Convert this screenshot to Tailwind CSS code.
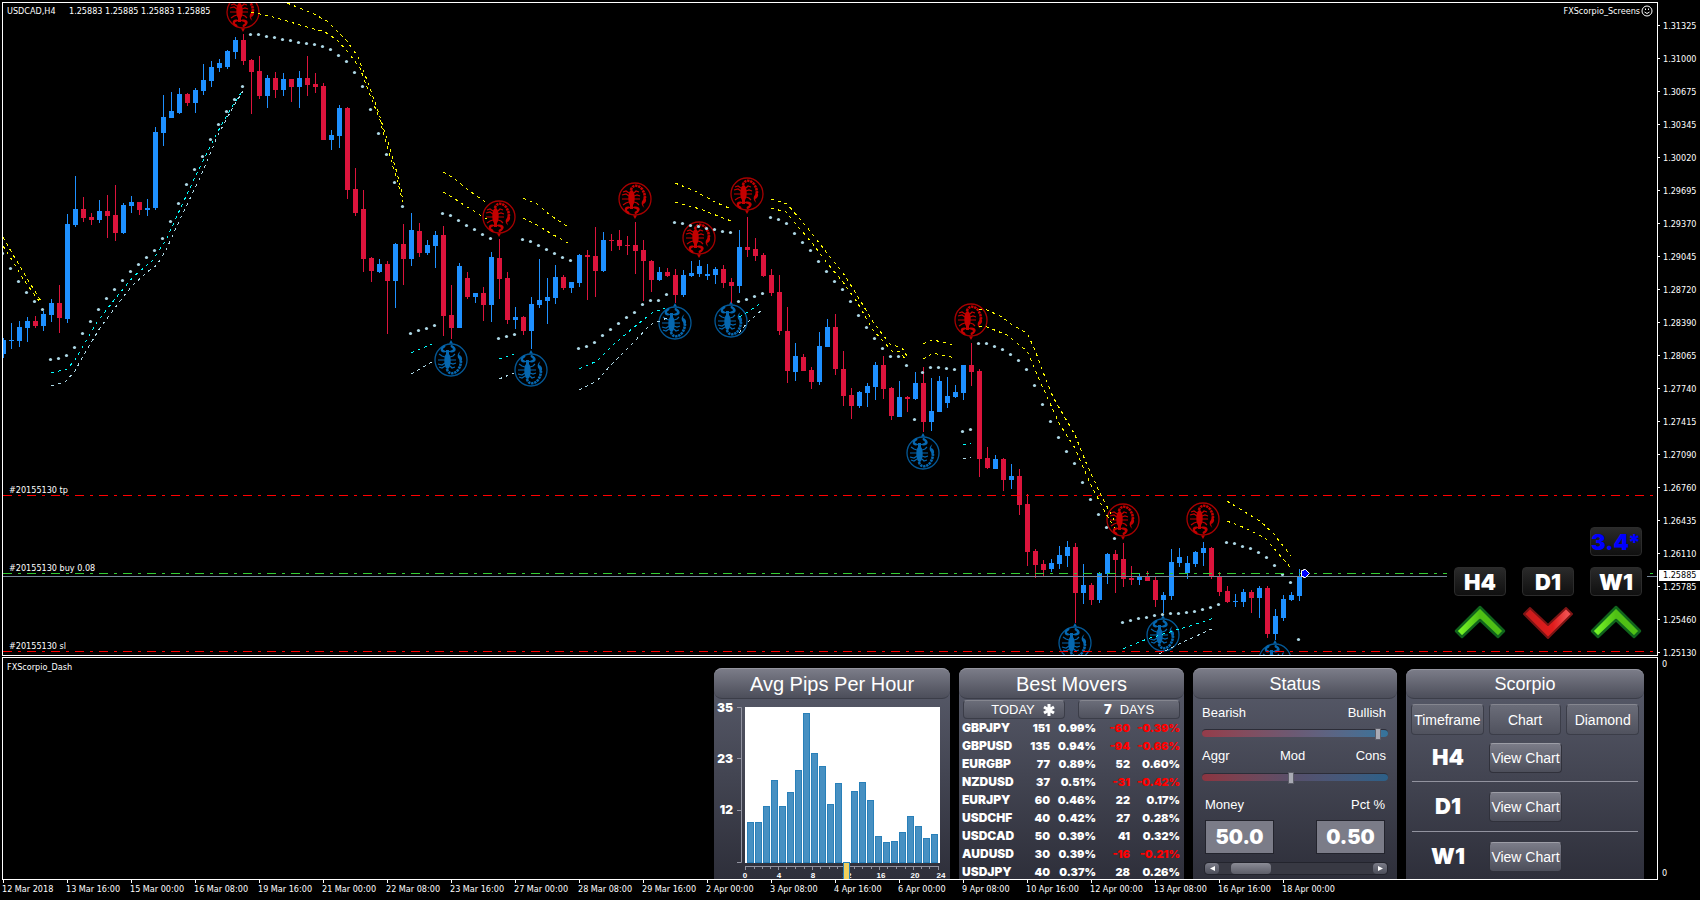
<!DOCTYPE html>
<html lang="en">
<head>
  <meta charset="UTF-8" />
  <meta name="viewport" content="width=device-width, initial-scale=1.0"/>
  <title>USDCAD,H4 - FXScorpio</title>
  <script src="https://cdn.jsdelivr.net/npm/@tailwindcss/browser@4"></script>
</head>
<body class="bg-black text-white">
  <div class="grid min-h-screen grid-cols-[minmax(0,1fr)_42px] grid-rows-[1fr_1px_223px_20px] overflow-hidden pt-[2px] pl-[2px] font-['DejaVu_Sans_Condensed','Noto_Sans',sans-serif] text-[9px] leading-3">

    <!-- Price chart -->
    <main class="relative overflow-hidden border border-white">
      <svg class="absolute inset-0 h-full w-full" id="price-chart" aria-label="USDCAD H4 candles">
        <defs>
          <g id="scorpion">
            <circle r="16" fill="none" stroke="currentColor" stroke-width="1.3" opacity="0.85"/>
            <path d="M-2 16.500H2L0 20Z" fill="currentColor"/>
            <ellipse cx="-3.500" cy="-1" rx="3.200" ry="8" fill="currentColor"/>
            <path d="M-5 6h3v4h-3z" fill="currentColor"/>
            <path d="M-4 -9C-3 -14 3 -15 7 -10C9 -7 10 -4 10 -1" fill="none" stroke="currentColor" stroke-width="2.600" stroke-dasharray="2.400 0.700"/>
            <path d="M9 -3C12 -1 12 4 8 5C9 7 8 8 10 9C6 7 6 3 8 1Z" fill="currentColor"/>
            <path d="M-6 -6L-9 -8L-12 -7M-6 -3L-9 -5L-13 -4M-6 0H-13M-6 3L-9 4L-12 6M-1 -6L1 -8L4 -7M-1 -3L2 -4L5 -3M-1 0H5M-1 3L2 4L4 6" fill="none" stroke="currentColor" stroke-width="1.200"/>
            <path d="M-5 8C-10 6 -13 11 -7 15C-5 15 -5 13 -7 12C-9 11 -8 10 -5 9ZM-2 8C4 6 8 11 1 15C-1 15 -1 13 1 12C3 11 2 10 -2 9Z" fill="currentColor"/>
          </g>
        </defs>
        <g transform="translate(-3 -3)">
          <g id="signals"></g>
          <g id="bands" fill="none" stroke-dasharray="3 4" shape-rendering="crispEdges"></g>
          <g id="candles" shape-rendering="crispEdges"></g>
          <g id="dots" fill="#add8e6"></g>
        </g>
        <!-- Order levels -->
        <g shape-rendering="crispEdges" stroke-dasharray="9 6 3 6">
          <path d="M0 492.500H3000M0 648.500H3000" stroke="#f00"/>
          <path d="M0 570.500H3000" stroke="#32cd32"/>
        </g>
        <path d="M0 573.500H3000" stroke="#778899" shape-rendering="crispEdges"/>
        <path d="M1300.500 566.500H1302.500L1306.500 570.500L1302.500 574.500H1300.500V573.500H1298.500V567.500H1300.500Z" fill="#00f" stroke="#fff"/>
      </svg>

      <div class="relative flex justify-between px-1 pt-[2px]">
        <p class="flex"><span class="w-[62px]">USDCAD,H4</span><span class="w-9">1.25883</span><span class="w-9">1.25885</span><span class="w-9">1.25883</span><span class="w-9">1.25885</span></p>
        <p class="flex gap-px">FXScorpio_Screens
          <svg class="h-3 w-3" viewBox="0 0 12 12" fill="none" stroke="#fff"><circle cx="6" cy="6" r="5"/><path d="M3.500 7Q6 10 8.500 7M4.500 3.500V5M7.500 3.500V5"/></svg>
        </p>
      </div>

      <p class="absolute top-[481px] left-[6px]">#20155130 tp</p>
      <p class="absolute top-[559px] left-[6px]">#20155130 buy 0.08</p>
      <p class="absolute top-[637px] left-[6px]">#20155130 sl</p>

      <!-- Timeframe trend widget -->
      <div class="absolute top-[524px] right-[10px] grid w-[200px] grid-cols-[52px_52px_52px] gap-x-4 bg-black pl-[7px] font-['Inter',sans-serif] text-[22px] leading-7 font-black">
        <div class="col-start-3 mb-[11px] h-[29px] rounded-sm border border-[#2c2c2c] bg-linear-to-b from-[#2a2a2a] to-[#101010] text-center text-[#00f]">3.4*</div>
        <button class="col-start-1 h-[29px] rounded-sm border border-[#2c2c2c] bg-linear-to-b from-[#2a2a2a] to-[#101010]">H4</button>
        <button class="h-[29px] rounded-sm border border-[#2c2c2c] bg-linear-to-b from-[#2a2a2a] to-[#101010]">D1</button>
        <button class="h-[29px] rounded-sm border border-[#2c2c2c] bg-linear-to-b from-[#2a2a2a] to-[#101010]">W1</button>
        <svg class="mt-[9px] h-[34px] w-[52px]" viewBox="0 0 52 34">
          <linearGradient id="up" x1="0" x2="1"><stop stop-color="#7dff2a"/><stop offset="0.5" stop-color="#4fbf14"/><stop offset="1" stop-color="#4fc016"/></linearGradient>
          <path d="M26 2L50 26L44 32L26 15L8 32L2 26Z" fill="url(#up)" stroke="#10641c" stroke-width="2.500" stroke-linejoin="round"/>
        </svg>
        <svg class="mt-[9px] h-[34px] w-[52px]" viewBox="0 0 52 34">
          <linearGradient id="down" x1="0" x2="1"><stop stop-color="#c81c1c"/><stop offset="0.6" stop-color="#e01c1c"/><stop offset="0.9" stop-color="#f05050"/></linearGradient>
          <path d="M26 33L50 9L44 3L26 20L8 3L2 9Z" fill="url(#down)" stroke="#7c1414" stroke-width="2" stroke-linejoin="round"/>
        </svg>
        <svg class="mt-[9px] h-[34px] w-[52px]" viewBox="0 0 52 34">
          <path d="M26 2L50 26L44 32L26 15L8 32L2 26Z" fill="url(#up)" stroke="#10641c" stroke-width="2.500" stroke-linejoin="round"/>
        </svg>
      </div>
    </main>

    <!-- Price scale -->
    <aside class="relative pt-[7px]">
      <ul id="prices" class="-mb-5"></ul>
      <p class="absolute top-[568px] right-0 left-[1px] h-[11px] bg-white pl-1 leading-[11px] text-black">1.25885</p>
    </aside>

    <div class="col-span-2"></div>

    <!-- Dashboard -->
    <section class="flex justify-between overflow-hidden border border-white pt-[10px] pr-[13px]">
      <h1 class="-mt-[7px] pl-1">FXScorpio_Dash</h1>

      <div class="flex gap-[9px] font-['Liberation_Sans',Arial,sans-serif]">
        <!-- Avg pips per hour -->
        <article class="h-[220px] w-[236px] rounded-lg bg-linear-to-b from-[#5a5d6c] to-[#2c2d38]">
          <h2 class="mb-2 h-[31px] rounded-lg border-t border-b border-t-[#94959f] border-b-[#3b3d48] bg-linear-to-b from-[#7b7c88] to-[#4c4e5a] text-center text-xl leading-[30px]">Avg Pips Per Hour</h2>
          <div class="flex">
            <ul class="-mt-[6px] w-[19px] text-right font-['Inter',sans-serif] text-xs leading-[14px] font-black">
              <li class="h-[51px]">35</li>
              <li class="h-[51px]">23</li>
              <li>12</li>
            </ul>
            <svg class="mr-[3px] ml-1 h-[156px] w-[5px]" fill="none" stroke="#9293a0"><path d="M0 0.500H4.500V155.500H0M0 51.500H4M0 103.500H4"/></svg>
            <div class="w-[195px]">
              <div id="bars" class="flex h-[156px] items-end gap-px bg-white px-[2px]"></div>
              <svg class="mt-[3px] h-1 w-[195px]" fill="none" stroke="#9293a0"><path d="M0 0.500H194M0.500 0V4M33.500 0V4M67.500 0V4M100.500 0V4M134.500 0V4M168.500 0V4M193.500 0V4"/><path d="M9.500 0V3M17.500 0V3M25.500 0V3M41.500 0V3M50.500 0V3M59.500 0V3M75.500 0V3M84.500 0V3M92.500 0V3M109.500 0V3M117.500 0V3M126.500 0V3M142.500 0V3M151.500 0V3M160.500 0V3M176.500 0V3M184.500 0V3"/></svg>
              <div class="relative -ml-[17px] grid w-[222px] grid-cols-[repeat(6,34px)_18px] text-center text-[8px] leading-[11px] font-bold">
                <span>0</span><span>4</span><span>8</span><span>12</span><span>16</span><span>20</span><span>24</span>
                <i class="absolute -top-[8px] left-[115px] h-6 w-[7px] border border-[#2980b9] bg-[#f0cf5c]"></i>
              </div>
            </div>
          </div>
        </article>

        <!-- Best movers -->
        <article class="h-[220px] w-[225px] rounded-lg bg-linear-to-b from-[#5a5d6c] to-[#2c2d38]">
          <h2 class="h-[31px] rounded-lg border-t border-b border-t-[#94959f] border-b-[#3b3d48] bg-linear-to-b from-[#7b7c88] to-[#4c4e5a] text-center text-xl leading-[30px]">Best Movers</h2>
          <div class="mt-px flex justify-between px-1 text-[13px] leading-[17px]">
            <button class="flex h-[19px] w-[102px] items-center justify-center gap-2 rounded border border-t-[#85868f] border-r-[#3b3d48] border-b-[#3b3d48] border-l-[#3b3d48] bg-linear-to-b from-[#6b6d79] to-[#50525e] pl-[18px]">TODAY
              <svg class="h-3 w-3" viewBox="0 0 12 12" stroke="#fff" stroke-width="3"><path d="M6 0V12M1 3L11 9M1 9L11 3"/></svg>
            </button>
            <button class="flex h-[19px] w-[102px] items-center justify-center gap-2 rounded border border-t-[#85868f] border-r-[#3b3d48] border-b-[#3b3d48] border-l-[#3b3d48] bg-linear-to-b from-[#6b6d79] to-[#50525e]"><b class="font-['Inter',sans-serif] font-black">7</b>DAYS</button>
          </div>
          <table class="ml-[3px] w-[218px] table-fixed text-right font-['Inter',sans-serif] text-[11px] leading-[18px] font-black">
            <colgroup><col class="w-[57px]"/><col class="w-[31px]"/><col class="w-[46px]"/><col class="w-[34px]"/><col class="w-[50px]"/></colgroup>
            <tbody id="movers"></tbody>
          </table>
        </article>

        <!-- Status -->
        <article class="h-[220px] w-[204px] rounded-lg bg-linear-to-b from-[#5a5d6c] to-[#2c2d38] text-[13px]">
          <h2 class="h-[31px] rounded-lg border-t border-b border-t-[#94959f] border-b-[#3b3d48] bg-linear-to-b from-[#7b7c88] to-[#4c4e5a] text-center text-lg leading-[30px]">Status</h2>
          <div class="px-[9px] leading-4">
            <label for="trend" class="mt-[6px] flex justify-between pr-[2px]"><span>Bearish</span><span>Bullish</span></label>
            <input id="trend" type="range" value="96" class="mt-[8px] block h-2 w-full appearance-none rounded border-t border-[#2c2d38] bg-linear-to-r from-[#943c4a] via-[#6b5a74] to-[#34749c] [&::-webkit-slider-thumb]:h-3 [&::-webkit-slider-thumb]:w-[6px] [&::-webkit-slider-thumb]:appearance-none [&::-webkit-slider-thumb]:border [&::-webkit-slider-thumb]:border-[#5c5d68] [&::-webkit-slider-thumb]:bg-[#a9aab4]"/>
            <label for="risk" class="mt-[11px] flex justify-between pr-[2px]"><span>Aggr</span><span>Mod</span><span>Cons</span></label>
            <input id="risk" type="range" value="48" class="mt-[9px] block h-2 w-full appearance-none rounded border-t border-[#2c2d38] bg-linear-to-r from-[#8c3440] via-[#56506c] to-[#2c6088] [&::-webkit-slider-thumb]:h-3 [&::-webkit-slider-thumb]:w-[6px] [&::-webkit-slider-thumb]:appearance-none [&::-webkit-slider-thumb]:border [&::-webkit-slider-thumb]:border-[#5c5d68] [&::-webkit-slider-thumb]:bg-[#a9aab4]"/>
            <div class="mt-4 flex justify-between px-[3px]">
              <label for="money">Money</label>
              <label for="pct">Pct %</label>
            </div>
            <div class="mt-[7px] flex justify-between px-[3px] font-['Inter',sans-serif] text-xl font-black">
              <input id="money" value="50.0" class="h-[34px] w-[69px] border border-[#23242d] bg-[#7b7c88] text-center"/>
              <input id="pct" value="0.50" class="h-[34px] w-[69px] border border-[#23242d] bg-[#7b7c88] text-center"/>
            </div>
            <div class="mt-[8px] ml-[2px] flex h-[13px] w-[184px] justify-between rounded border border-[#23242d] bg-[#383943]">
              <button aria-label="Scroll left" class="flex h-full w-[14px] items-center justify-center rounded-sm bg-linear-to-b from-[#7b7c88] to-[#4c4e5a]"><svg class="h-[5px] w-[5px]" viewBox="0 0 5 5"><path d="M5 0V5L0 2.500Z" fill="#fff"/></svg></button>
              <i class="mr-auto ml-3 h-full w-[40px] rounded bg-linear-to-b from-[#8b8c96] to-[#5c5d68]"></i>
              <button aria-label="Scroll right" class="flex h-full w-[14px] items-center justify-center rounded-sm bg-linear-to-b from-[#7b7c88] to-[#4c4e5a]"><svg class="h-[5px] w-[5px]" viewBox="0 0 5 5"><path d="M0 0V5L5 2.500Z" fill="#fff"/></svg></button>
            </div>
          </div>
        </article>

        <!-- Scorpio -->
        <article class="mt-px h-[220px] w-[238px] rounded-lg bg-linear-to-b from-[#5a5d6c] to-[#2c2d38] text-sm">
          <h2 class="h-[30px] rounded-lg border-t border-b border-t-[#94959f] border-b-[#3b3d48] bg-linear-to-b from-[#7b7c88] to-[#4c4e5a] text-center text-lg leading-[28px]">Scorpio</h2>
          <div class="mt-[5px] grid grid-cols-3 gap-[5px] px-[5px]">
            <button class="h-[31px] rounded-sm border border-t-[#85868f] border-r-[#3b3d48] border-b-[#3b3d48] border-l-[#3b3d48] bg-linear-to-b from-[#6b6d79] to-[#50525e]">Timeframe</button>
            <button class="h-[31px] rounded-sm border border-t-[#85868f] border-r-[#3b3d48] border-b-[#3b3d48] border-l-[#3b3d48] bg-linear-to-b from-[#6b6d79] to-[#50525e]">Chart</button>
            <button class="h-[31px] rounded-sm border border-t-[#85868f] border-r-[#3b3d48] border-b-[#3b3d48] border-l-[#3b3d48] bg-linear-to-b from-[#6b6d79] to-[#50525e]">Diamond</button>
          </div>
          <div id="timeframes" class="mx-[6px] divide-y divide-[#92939f]"></div>
        </article>
      </div>
    </section>

    <aside class="flex flex-col justify-between py-px pl-1">
      <span>0</span>
      <span>0</span>
    </aside>

    <!-- Time scale -->
    <ul id="times" class="col-span-2 flex overflow-hidden"></ul>
  </div>

  <script>
    const BLUE = "#1e90ff", RED = "#dc143c";

    // high, body top, body bottom, low, direction; one candle every 8px
    const candles = `338,340,354,358,b 323,340,341,349,b 321,327,341,347,b 317,321,328,342,b 316,321,326,328,r 311,314,326,331,b 299,303,315,322,b 285,303,318,333,r 214,224,319,323,b 176,209,225,227,b
      197,209,218,222,r 213,217,220,225,r 200,211,220,223,b 195,211,216,238,r 185,215,233,241,r 203,205,233,234,b 196,202,206,213,b 202,202,210,215,r 199,208,210,216,b 127,132,208,210,b
      95,117,133,146,b 92,111,118,118,b 88,94,113,114,b 93,94,103,106,r 88,90,103,113,b 64,80,91,95,b 61,67,81,87,b 59,63,68,72,b 50,51,67,69,b 37,40,52,59,b
      34,40,61,65,r 59,60,72,114,r 56,71,96,99,r 75,78,96,108,b 72,78,90,98,r 73,79,90,96,b 79,79,87,102,r 71,78,87,108,b 56,78,85,96,r 73,84,87,93,r
      83,86,140,140,r 130,135,140,150,b 105,108,136,148,b 107,108,190,199,r 168,189,213,216,r 190,209,259,272,r 257,258,271,282,r 259,264,272,273,b 261,264,281,334,r 243,244,281,308,b
      224,244,259,285,r 213,230,259,266,b 223,231,253,257,r 240,245,253,255,b 231,235,246,268,b 226,235,316,336,r 285,315,328,339,r 263,266,328,328,b 272,278,297,299,r 293,293,297,303,b
      287,293,305,321,r 252,257,305,322,b 239,258,279,299,r 272,278,320,324,r 307,317,320,329,b 316,317,331,335,r 297,304,331,349,b 259,300,305,308,b 278,297,301,324,b 265,277,298,304,b
      275,277,288,290,r 282,282,288,293,b 254,255,283,287,b 250,255,257,300,r 227,256,271,297,r 232,240,271,272,b 234,240,241,251,r 230,240,246,250,r 236,245,246,255,r 222,245,251,274,r
      240,250,261,301,r 260,261,280,292,r 267,272,280,281,b 268,272,276,277,r 269,275,295,303,r 270,275,295,297,b 261,273,276,277,b 260,266,274,277,b 264,274,276,280,b 267,269,275,284,b
      265,269,283,288,r 278,282,286,303,r 230,247,286,293,b 217,247,250,257,r 238,249,256,261,r 253,255,276,277,r 269,275,293,296,r 275,292,331,335,r 307,331,371,383,r 343,356,372,381,b
      354,357,371,371,r 367,370,382,389,r 332,346,382,385,b 319,327,347,347,b 314,327,369,375,r 351,369,396,406,r 388,395,406,419,r 391,392,406,408,b 383,386,393,407,b 362,365,387,400,b
      356,365,389,399,r 387,388,416,420,r 381,397,417,417,b 396,397,399,412,r 372,383,399,400,b 367,383,422,432,r 378,411,422,431,b 376,381,412,412,b 377,396,403,408,b 385,392,397,398,b
      365,365,393,400,b 343,365,372,386,r 369,371,459,477,r 447,458,468,469,r 455,459,469,469,b 458,459,480,491,r 464,476,480,489,b 469,476,505,515,r 494,504,552,566,r 549,551,565,578,r
      560,564,570,576,r 559,563,569,572,b 546,555,564,569,b 541,547,556,567,b 543,547,593,623,r 564,585,593,604,b 583,585,600,605,r 572,573,600,603,b 553,554,574,584,b 550,554,560,593,r
      543,559,579,587,r 566,578,580,585,r 574,576,580,585,b 571,576,581,581,r 577,580,600,607,r 592,595,600,613,b 549,562,596,600,b 548,557,563,567,b 556,563,573,579,b 551,552,564,567,b
      542,548,553,566,b 547,548,577,579,r 572,576,592,596,r 586,591,602,603,r 594,601,602,607,b 589,592,602,607,b 590,592,598,613,r 586,588,598,618,b 586,588,634,638,r 609,616,634,640,b
      595,599,618,621,b 592,595,600,601,b 569,576,596,601,b`.split(/\s+/);

    document.getElementById("candles").innerHTML = candles.map((c, i) => {
      const [high, top, bottom, low, dir] = c.split(",");
      const x = 3 + i * 8;
      const color = dir === "b" ? BLUE : RED;
      return `<rect x="${x}" y="${high}" width="1" height="${low - high}" fill="${color}"/>
        <rect x="${x - 2}" y="${top}" width="5" height="${bottom - top}" fill="${color}"/>`;
    }).join("");

    // trailing stop dots, one per candle
    const dots = [
      253,268,281,292,301,309,359,358,355,347,333,321,309,298,289,280,271,264,257,250,238,221,203,184,169,156,139,124,111,99,86,
      34,34,36,37,39,40,42,43,44,46,49,55,61,72,86,109,133,154,182,206,333,330,328,325,213,215,220,225,229,234,238,338,336,334,
      239,241,245,249,253,257,260,348,346,342,335,329,323,317,312,304,300,300,294,222,223,225,226,228,229,231,232,301,299,296,293,
      217,219,223,233,242,250,261,271,281,289,301,315,327,338,348,356,356,365,419,372,367,367,368,369,431,429,
      343,343,346,349,354,360,369,385,404,421,437,451,463,482,499,514,527,538,622,620,618,617,615,614,613,613,612,611,609,607,604,
      542,543,546,548,552,557,565,574,582,639
    ];
    document.getElementById("dots").innerHTML = dots.map((y, i) =>
      `<circle cx="${2.5 + i * 8}" cy="${y + 0.5}" r="1.6"/>`).join("");

    const bands = {
      "#ffff00": [
        "3,237 12,253 22,270 31,285 41,301", "3,246 12,260 22,277 31,290 40,302",
        "287,3 312,13 327,21 337,31 347,41 358,57 367,80 377,108 388,142 397,173 403,197",
        "251,12 277,18 300,25 325,32 337,40 348,52 360,68 368,90 380,120 388,150 397,180 403,202",
        "443,172 452,177 467,189 488,204", "443,192 452,197 467,207 487,219",
        "523,198 537,204 550,215 568,227", "523,218 537,225 550,233 568,243",
        "675,183 695,191 715,202 731,209", "675,202 700,209 731,221",
        "771,199 787,204 793,211 810,231 827,253 843,273 857,295 873,322 890,344 902,348 907,356",
        "771,208 786,212 800,229 813,244 827,263 843,282 857,302 873,330 892,351 900,352 906,360",
        "923,344 932,340 943,342 955,346", "923,359 933,353 955,358",
        "979,309 987,310 1002,317 1012,325 1027,333 1035,350 1043,372 1053,397 1075,435 1087,465 1100,493 1114,520",
        "979,326 987,327 1007,335 1027,351 1043,388 1060,425 1075,448 1090,483 1106,514 1115,528",
        "1227,501 1248,514 1260,521 1273,533 1291,556", "1227,521 1245,528 1265,538 1278,553 1291,568"
      ],
      "#00ffff": [
        "51,373 67,369 75,360 83,346 97,322 115,299 133,277 153,260 167,238 182,205 197,173 217,133 233,105 243,90",
        "411,353 432,344", "499,359 514,354", "579,369 597,361 613,345 633,328 652,313 665,308",
        "739,317 748,312 761,303", "963,445 971,443", "1123,649 1147,639 1173,631 1203,622 1216,617"
      ],
      "#add8e6": [
        "51,386 65,382 75,371 82,358 92,341 100,328 123,297 133,285 147,272 157,265 167,248 182,215 200,178 217,137 233,107 243,91",
        "411,374 432,362", "499,379 514,373", "579,390 597,381 610,366 633,343 650,325 667,318",
        "739,333 748,322 762,310", "963,459 971,457", "1159,654 1183,642 1203,633 1216,627"
      ]
    };
    document.getElementById("bands").innerHTML = Object.entries(bands).map(([color, lines]) =>
      lines.map(points => `<polyline points="${points}" stroke="${color}"/>`).join("")).join("");

    const sells = [[243, 12], [499, 217], [635, 199], [699, 238], [747, 194], [971, 320], [1123, 520], [1203, 519]];
    const buys = [[451, 360], [531, 370], [675, 323], [731, 321], [923, 453], [1075, 643], [1163, 635], [1275, 660]];
    document.getElementById("signals").innerHTML =
      sells.map(([x, y]) => `<use href="#scorpion" transform="translate(${x} ${y})" color="#c40000"/>`).join("") +
      buys.map(([x, y]) => `<use href="#scorpion" transform="translate(${x} ${y}) scale(1 -1)" color="#0567b0"/>`).join("");

    const prices = ["1.31325", "1.31000", "1.30675", "1.30345", "1.30020", "1.29695", "1.29370", "1.29045", "1.28720", "1.28390",
      "1.28065", "1.27740", "1.27415", "1.27090", "1.26760", "1.26435", "1.26110", "1.25785", "1.25460", "1.25130"];
    document.getElementById("prices").innerHTML = prices.map(p =>
      `<li class="flex h-[33px] items-center gap-[3px]"><i class="h-px w-[2px] bg-white"></i>${p}</li>`).join("");

    const times = ["12 Mar 2018", "13 Mar 16:00", "15 Mar 00:00", "16 Mar 08:00", "19 Mar 16:00", "21 Mar 00:00", "22 Mar 08:00",
      "23 Mar 16:00", "27 Mar 00:00", "28 Mar 08:00", "29 Mar 16:00", "2 Apr 00:00", "3 Apr 08:00", "4 Apr 16:00", "6 Apr 00:00",
      "9 Apr 08:00", "10 Apr 16:00", "12 Apr 00:00", "13 Apr 08:00", "16 Apr 16:00", "18 Apr 00:00"];
    document.getElementById("times").innerHTML = times.map(t =>
      `<li class="w-16 shrink-0 whitespace-nowrap"><i class="ml-px block h-[3px] w-px bg-white"></i>${t}</li>`).join("");

    const pips = [41, 41, 57, 83, 57, 71, 93, 150, 110, 97, 59, 80, 0, 72, 81, 63, 27, 21, 22, 31, 47, 37, 25, 29];
    document.getElementById("bars").innerHTML = pips.map(h =>
      h ? `<i class="w-[7px] border border-[#2980b9] bg-[#4790c2]" style="height:${h}px"></i>` : `<i class="w-[7px]"></i>`).join("");

    const movers = [
      ["GBPJPY", "151", "0.99%", "-60", "-0.39%"],
      ["GBPUSD", "135", "0.94%", "-94", "-0.66%"],
      ["EURGBP", "77", "0.89%", "52", "0.60%"],
      ["NZDUSD", "37", "0.51%", "-31", "-0.42%"],
      ["EURJPY", "60", "0.46%", "22", "0.17%"],
      ["USDCHF", "40", "0.42%", "27", "0.28%"],
      ["USDCAD", "50", "0.39%", "41", "0.32%"],
      ["AUDUSD", "30", "0.39%", "-16", "-0.21%"],
      ["USDJPY", "40", "0.37%", "28", "0.26%"]
    ];
    document.getElementById("movers").innerHTML = movers.map(([pair, ...cells]) =>
      `<tr><th class="text-left text-xs leading-[18px] font-black">${pair}</th>${cells.map(c =>
        `<td class="${c.startsWith("-") ? "text-[#f00]" : "text-white"}">${c}</td>`).join("")}</tr>`).join("");

    document.getElementById("timeframes").innerHTML = ["H4", "D1", "W1"].map(tf => `
      <div class="grid h-[50px] grid-cols-3 items-center gap-[5px] first:h-[47px]">
        <b class="text-center font-['Inter',sans-serif] text-[22px] font-black">${tf}</b>
        <button class="h-[30px] w-[73px] rounded border border-t-[#9c9da6] border-r-[#30313b] border-b-[#30313b] border-l-[#30313b] bg-linear-to-b from-[#7b7c88] to-[#4c4e5a] whitespace-nowrap">View Chart</button>
      </div>`).join("");
  </script>
</body>
</html>
